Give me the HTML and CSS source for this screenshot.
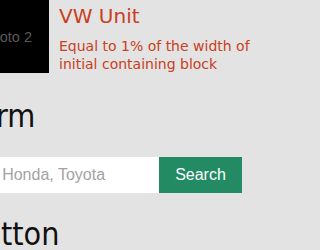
FILE: index.html
```html
<!DOCTYPE html>
<html>
<head>
<meta charset="utf-8">
<link rel="stylesheet" href="styles.css">
</head>
<body>
<div class="viewport">
<div class="page">
  <div class="media">
    <div class="photo"><span>Photo 2</span></div>
    <div class="media-body">
      <h3 class="media-title">VW Unit</h3>
      <p class="media-text">Equal to 1% of the width of the initial containing block</p>
    </div>
  </div>
  <h2 class="section-title">Form</h2>
  <form class="search">
    <input class="search-input" type="text" placeholder="e.g. Honda, Toyota">
    <button class="search-btn" type="button">Search</button>
  </form>
  <h2 class="section-title">Button</h2>
</div>
</div>
</body>
</html>
```

FILE: styles.css
```css
html, body {
  margin: 0;
  padding: 0;
  background: #e3e3e3;
  overflow: hidden;
}
.viewport {
  width: 250px;
  height: 250px;
  overflow: hidden;
}
.page {
  margin-left: -43px;
  width: 340px;
}
.media {
  display: flex;
  align-items: flex-start;
  margin-bottom: 24px;
}
.photo {
  flex: none;
  width: 92px;
  height: 73px;
  background: #000;
  display: flex;
  align-items: center;
  justify-content: center;
  padding-left: 8px;
  box-sizing: border-box;
  color: #5a5a5a;
  font-family: "Liberation Sans", Arial, sans-serif;
  font-size: 14.5px;
}
.media-body {
  width: 236px;
  margin-left: 10px;
  color: #c8401c;
  font-family: "DejaVu Sans", Verdana, sans-serif;
}
.media-title {
  margin: 4px 0 0;
  font-size: 20px;
  line-height: 24px;
  font-weight: normal;
}
.media-text {
  margin: 9px 0 0;
  font-size: 14px;
  line-height: 18px;
}
.section-title {
  margin: 0 0 0 6px;
  font-family: "DejaVu Sans Condensed", "DejaVu Sans", sans-serif;
  font-size: 32px;
  line-height: 38px;
  font-weight: normal;
  color: #111;
}
.search {
  display: flex;
  margin: 22px 0;
  width: 285px;
}
.search-input {
  flex: 1;
  min-width: 0;
  height: 36px;
  box-sizing: border-box;
  border: none;
  padding: 0 14px;
  margin: 0;
  background: #fff;
  font-family: "Liberation Sans", Arial, sans-serif;
  font-size: 16px;
  outline: none;
}
.search-input::placeholder {
  color: #a3a3a3;
}
.search-btn {
  flex: none;
  width: 83px;
  height: 36px;
  border: none;
  margin: 0;
  padding: 0;
  background: #238b63;
  color: #fff;
  font-family: "Liberation Sans", Arial, sans-serif;
  font-size: 16px;
}
```
